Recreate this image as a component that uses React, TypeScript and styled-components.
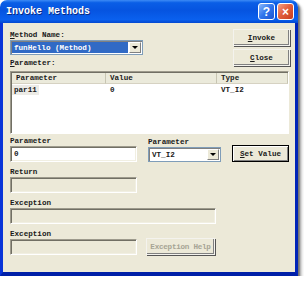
import styled, { createGlobalStyle } from "styled-components";

const GlobalStyle = createGlobalStyle`
  html, body {
    margin: 0;
    background: #ffffff;
  }
  body {
    font-family: "Liberation Mono", "DejaVu Sans Mono", monospace;
    font-size: 7.6px;
    font-weight: bold;
    color: #1a1a1a;
  }
`;

const Window = styled.div`
  width: 298px;
  height: 276px;
  display: flex;
  flex-direction: column;
  box-shadow: 2px 2px 2px rgba(0, 0, 0, 0.45), 4px 4px 3px rgba(0, 0, 0, 0.2);
  border-radius: 7px 7px 0 0;
`;

const TitleBar = styled.div`
  height: 23px;
  flex: none;
  display: flex;
  align-items: center;
  padding: 0 4px 0 6px;
  border-radius: 7px 7px 0 0;
  background: linear-gradient(
    #3d8bf5 0%,
    #0a5ee6 12%,
    #0654e0 45%,
    #0a60ee 85%,
    #0348d0 100%
  );
`;

const Title = styled.div`
  flex: 1;
  color: #fff;
  font-weight: bold;
  font-size: 10px;
  text-shadow: 1px 1px 0 #0a2a80;
`;

const CaptionButton = styled.div<{ $red?: boolean }>`
  width: 15px;
  height: 15px;
  margin-left: 2px;
  border: 1px solid #fff;
  border-radius: 3px;
  display: flex;
  align-items: center;
  justify-content: center;
  color: #fff;
  font-family: "Liberation Sans", Arial, sans-serif;
  font-weight: bold;
  font-size: 12px;
  background: ${(p) =>
    p.$red
      ? "linear-gradient(135deg, #f4a084 0%, #e2603e 45%, #c83c1c 100%)"
      : "linear-gradient(135deg, #8cb8fa 0%, #2f74ec 50%, #1c54d0 100%)"};
`;

const Frame = styled.div`
  flex: 1;
  background: #ece9d8;
  border: 3px solid #0834d8;
  border-top: none;
  border-right: 3px solid #0024b8;
  border-bottom: 4px solid #0020a8;
  padding: 6px 5px 0 7px;
  display: flex;
  flex-direction: column;
`;

const TopRow = styled.div`
  display: flex;
  justify-content: space-between;
`;

const Column = styled.div<{ $w: number }>`
  width: ${(p) => p.$w}px;
  display: flex;
  flex-direction: column;
`;

const Label = styled.div<{ $top?: number }>`
  line-height: 9px;
  height: 9px;
  margin-top: ${(p) => p.$top ?? 0}px;
  white-space: nowrap;
`;

const Combo = styled.div<{ $w: number; $h?: number }>`
  width: ${(p) => p.$w}px;
  height: ${(p) => p.$h ?? 15}px;
  box-sizing: border-box;
  background: #fff;
  border: 1px solid #7f9db9;
  box-shadow: inset 1px 1px 0 #808080;
  display: flex;
  align-items: stretch;
  padding: 1px;
`;

const ComboText = styled.div<{ $selected?: boolean }>`
  flex: 1;
  display: flex;
  align-items: center;
  padding-left: 2px;
  margin-right: 1px;
  background: ${(p) => (p.$selected ? "#316ac5" : "transparent")};
  color: ${(p) => (p.$selected ? "#fff" : "inherit")};
  white-space: nowrap;
  overflow: hidden;
`;

const ComboArrow = styled.div`
  width: 12px;
  box-sizing: border-box;
  background: #ece9d8;
  border: 1px solid;
  border-color: #fff #808080 #808080 #fff;
  display: flex;
  align-items: center;
  justify-content: center;
  &::after {
    content: "";
    border-left: 3px solid transparent;
    border-right: 3px solid transparent;
    border-top: 3px solid #000;
  }
`;

const Button = styled.div<{ $w: number; $default?: boolean; $disabled?: boolean }>`
  width: ${(p) => p.$w}px;
  height: 17px;
  box-sizing: border-box;
  background: #ece9d8;
  border: 1px solid ${(p) => (p.$default ? "#000" : "#f4f3ee")};
  box-shadow: ${(p) =>
    p.$default
      ? "inset 1px 1px 0 #fff, inset -1px -1px 0 #808080"
      : "inset -1px -1px 0 #808080, 1px 1px 0 #555"};
  display: flex;
  align-items: center;
  justify-content: center;
  color: ${(p) => (p.$disabled ? "#a6a494" : "inherit")};
  white-space: nowrap;
  letter-spacing: ${(p) => (p.$disabled ? "-0.25px" : "0")};
  span {
    text-decoration: underline;
  }
`;

const ListView = styled.div`
  margin-top: 3px;
  width: 279px;
  height: 63px;
  box-sizing: border-box;
  background: #fff;
  border: 1px solid;
  border-color: #9d9a8c #fff #fff #9d9a8c;
  box-shadow: inset 1px 1px 0 #716f64;
  padding: 1px 0 0 1px;
`;

const HeaderRow = styled.div`
  display: flex;
  height: 11px;
`;

const HeaderCell = styled.div<{ $w: number }>`
  width: ${(p) => p.$w}px;
  box-sizing: border-box;
  padding-left: 4px;
  line-height: 10px;
  background: #ebeadb;
  border-right: 1px solid #c7c5b2;
  border-bottom: 1px solid #d6d2c2;
  white-space: nowrap;
`;

const DataRow = styled.div`
  display: flex;
  height: 10px;
  margin-top: 1px;
`;

const DataCell = styled.div<{ $w: number; $focus?: boolean }>`
  width: ${(p) => p.$w}px;
  padding-left: ${(p) => (p.$focus ? 0 : 4)}px;
  box-sizing: border-box;
  line-height: 10px;
  span {
    display: inline-block;
    padding: 0 2px;
    background: ${(p) => (p.$focus ? "#ecebe6" : "transparent")};
  }
`;

const FieldRow = styled.div<{ $top: number }>`
  display: flex;
  align-items: flex-end;
  margin-top: ${(p) => p.$top}px;
`;

const Field = styled.div<{ $w: number; $disabled?: boolean }>`
  width: ${(p) => p.$w}px;
  height: 16px;
  box-sizing: border-box;
  background: ${(p) => (p.$disabled ? "#ece9d8" : "#fff")};
  border: 1px solid;
  border-color: #9d9a8c #fff #fff #9d9a8c;
  box-shadow: inset 1px 1px 0 #716f64, inset -1px -1px 0 #f1efe2;
  padding-left: 3px;
  line-height: 14px;
`;

const Spacer = styled.div<{ $w: number }>`
  width: ${(p) => p.$w}px;
  flex: none;
`;

export default function App() {
  return (
    <>
      <GlobalStyle />
      <Window>
        <TitleBar>
          <Title>Invoke Methods</Title>
          <CaptionButton>?</CaptionButton>
          <CaptionButton $red>×</CaptionButton>
        </TitleBar>
        <Frame>
          <TopRow>
            <Column $w={134}>
              <Label $top={2}>
                <u>M</u>ethod Name:
              </Label>
              <Combo $w={133}>
                <ComboText $selected>funHello (Method)</ComboText>
                <ComboArrow />
              </Combo>
              <Label $top={4}>
                <u>P</u>arameter:
              </Label>
            </Column>
            <Column $w={57}>
              <Button $w={57}>
                <span>I</span>nvoke
              </Button>
              <Button $w={57} style={{ marginTop: 3 }}>
                <span>C</span>lose
              </Button>
            </Column>
          </TopRow>

          <ListView>
            <HeaderRow>
              <HeaderCell $w={94}>Parameter</HeaderCell>
              <HeaderCell $w={111}>Value</HeaderCell>
              <HeaderCell $w={71}>Type</HeaderCell>
            </HeaderRow>
            <DataRow>
              <DataCell $w={94} $focus>
                <span>par11</span>
              </DataCell>
              <DataCell $w={111}>0</DataCell>
              <DataCell $w={71}>VT_I2</DataCell>
            </DataRow>
          </ListView>

          <FieldRow $top={3}>
            <Column $w={127}>
              <Label>Parameter</Label>
              <Field $w={127}>0</Field>
            </Column>
            <Spacer $w={11} />
            <Column $w={73}>
              <Label>Parameter</Label>
              <Combo $w={73} $h={15}>
                <ComboText>VT_I2</ComboText>
                <ComboArrow />
              </Combo>
            </Column>
            <Spacer $w={11} />
            <Button $w={57} $default>
              <span>S</span>et Value
            </Button>
          </FieldRow>

          <Column $w={127} style={{ marginTop: 6 }}>
            <Label>Return</Label>
            <Field $w={127} $disabled />
          </Column>

          <Column $w={206} style={{ marginTop: 6 }}>
            <Label>Exception</Label>
            <Field $w={206} $disabled />
          </Column>

          <FieldRow $top={6}>
            <Column $w={127}>
              <Label>Exception</Label>
              <Field $w={127} $disabled />
            </Column>
            <Spacer $w={9} />
            <Button $w={69} $disabled>
              Exception Help
            </Button>
          </FieldRow>
        </Frame>
      </Window>
    </>
  );
}
